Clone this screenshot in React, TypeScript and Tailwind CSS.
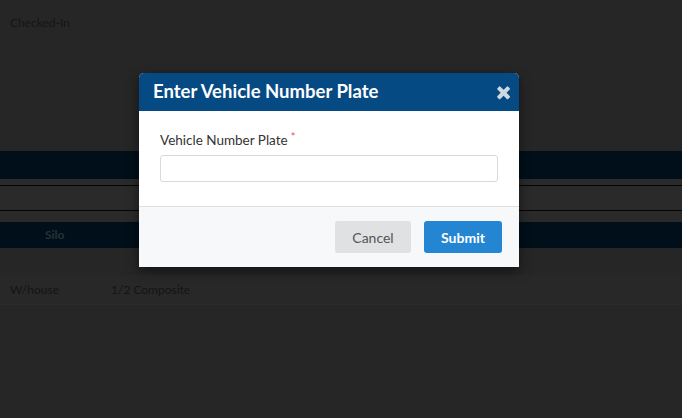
export default function App() {
  return (
    <div className="relative w-[682px] h-[418px] overflow-hidden bg-[#262626] font-['Lato',sans-serif]">
      {/* dimmed page behind the modal */}
      <div className="flex flex-col">
        <div className="h-[151px] px-[10px] pt-[14px] text-[12px] text-[#151515]">Checked-In</div>
        <div className="h-[28px] bg-[#000f19]" />
        <div className="h-[6px] bg-[#2a2a2a]" />
        <div className="h-px bg-[#050505]" />
        <div className="h-[24px] bg-[#2a2a2a]" />
        <div className="h-px bg-[#050505]" />
        <div className="h-[11px] bg-[#2a2a2a]" />
        <div className="h-[26px] bg-[#000f19] flex items-center pl-[45px] text-[12px] font-bold text-[#27323b]">Silo</div>
        <div className="h-[27px] bg-[#262626]" />
        <div className="h-[30px] bg-[#282828] flex items-center text-[12px] text-[#141414] border-b border-[#2c2c2c]">
          <span className="w-[111px] pl-[10px]">W/house</span>
          <span>1/2 Composite</span>
        </div>
      </div>

      {/* modal */}
      <div className="absolute left-[139px] top-[73px] w-[380px] rounded-t-[5px] bg-white shadow-[0_4px_12px_rgba(0,0,0,0.5)] overflow-hidden">
        <div className="h-[38px] bg-[#064a84] flex items-center justify-between pl-[14px] pr-[8px]">
          <span className="text-[18.5px] font-bold text-white">Enter Vehicle Number Plate</span>
          <svg width="15" height="15" viewBox="100 240 1390 1390" className="mr-px">
            <path
              fill="#cfd7df"
              d="M1490 1322q0 40-28 68l-136 136q-28 28-68 28t-68-28l-294-294-294 294q-28 28-68 28t-68-28l-136-136q-28-28-28-68t28-68l294-294-294-294q-28-28-28-68t28-68l136-136q28-28 68-28t68 28l294 294 294-294q28-28 68-28t68 28l136 136q28 28 28 68t-28 68l-294 294 294 294q28 28 28 68z"
            />
          </svg>
        </div>
        <div className="px-[21px] pt-[21px] pb-[24px] border-b border-[#dcdfe3]">
          <div className="text-[13.5px] text-[#333] leading-[16px] mb-[6px]">
            Vehicle Number Plate<span className="text-[#e05555] ml-[3px] relative -top-[4px] text-[11px]">*</span>
          </div>
          <input
            className="block w-full h-[27px] rounded-[3px] border border-[#d9d9d9] bg-white outline-none"
          />
        </div>
        <div className="h-[60px] bg-[#f7f8fa] flex items-center justify-end gap-[13px] pr-[17px]">
          <button className="w-[76px] h-[32px] rounded-[3px] bg-[#e0e1e3] text-[14px] text-[#555]">Cancel</button>
          <button className="w-[78px] h-[32px] rounded-[3px] bg-[#2486d3] text-[14px] font-bold text-white">Submit</button>
        </div>
      </div>
    </div>
  );
}
